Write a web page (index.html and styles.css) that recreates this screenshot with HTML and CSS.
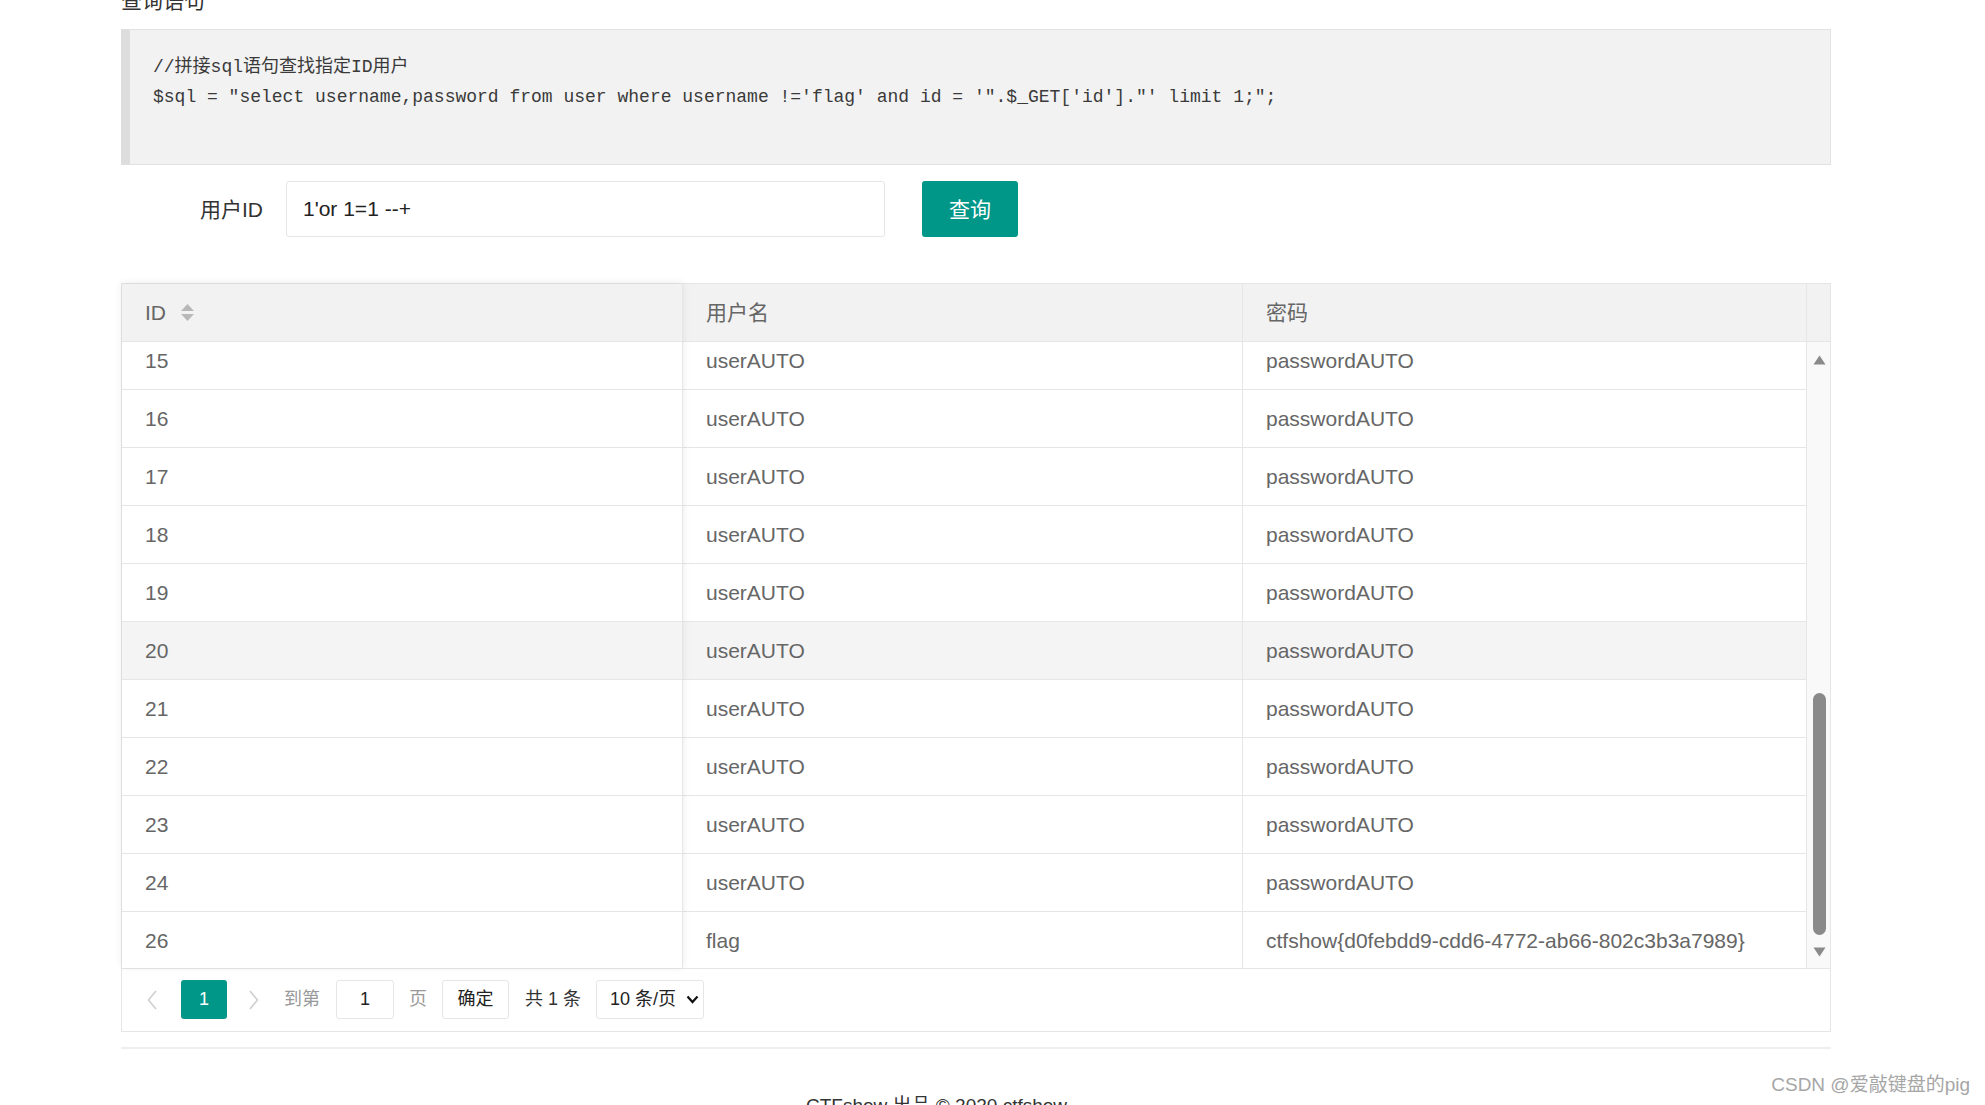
FILE: index.html
```html
<!DOCTYPE html>
<html lang="zh-CN">
<head>
<meta charset="utf-8">
<title>查询语句</title>
<link rel="stylesheet" href="styles.css">
</head>
<body>
<div class="page">
  <div class="title">查询语句</div>
  <pre class="code">//拼接sql语句查找指定ID用户
$sql = "select username,password from user where username !='flag' and id = '".$_GET['id']."' limit 1;";
</pre>
  <form class="form">
    <label class="label">用户ID</label>
    <div class="input">1'or 1=1 --+</div>
    <button class="btn" type="button">查询</button>
  </form>

  <div class="table">
    <div class="grid">
      <div class="fix">
        <div class="th th-id">ID
          <svg class="sort" width="13" height="17" viewBox="0 0 13 17"><path d="M0 7 L6.5 0 L13 7 Z" fill="#b8b8b8"/><path d="M0 10 L13 10 L6.5 17 Z" fill="#b8b8b8"/></svg>
        </div>
        <div class="body">
          <div class="rows">
            <div class="td">15</div>
            <div class="td">16</div>
            <div class="td">17</div>
            <div class="td">18</div>
            <div class="td">19</div>
            <div class="td hover">20</div>
            <div class="td">21</div>
            <div class="td">22</div>
            <div class="td">23</div>
            <div class="td">24</div>
            <div class="td">26</div>
          </div>
        </div>
      </div>
      <div class="main">
        <div class="thead">
          <div class="th c2 cjk">用户名</div>
          <div class="th c3 cjk">密码</div>
          <div class="th patch"></div>
        </div>
        <div class="mbody">
          <div class="body">
            <div class="rows">
              <div class="tr"><div class="td c2">userAUTO</div><div class="td c3">passwordAUTO</div></div>
              <div class="tr"><div class="td c2">userAUTO</div><div class="td c3">passwordAUTO</div></div>
              <div class="tr"><div class="td c2">userAUTO</div><div class="td c3">passwordAUTO</div></div>
              <div class="tr"><div class="td c2">userAUTO</div><div class="td c3">passwordAUTO</div></div>
              <div class="tr"><div class="td c2">userAUTO</div><div class="td c3">passwordAUTO</div></div>
              <div class="tr hover"><div class="td c2">userAUTO</div><div class="td c3">passwordAUTO</div></div>
              <div class="tr"><div class="td c2">userAUTO</div><div class="td c3">passwordAUTO</div></div>
              <div class="tr"><div class="td c2">userAUTO</div><div class="td c3">passwordAUTO</div></div>
              <div class="tr"><div class="td c2">userAUTO</div><div class="td c3">passwordAUTO</div></div>
              <div class="tr"><div class="td c2">userAUTO</div><div class="td c3">passwordAUTO</div></div>
              <div class="tr"><div class="td c2">flag</div><div class="td c3">ctfshow{d0febdd9-cdd6-4772-ab66-802c3b3a7989}</div></div>
            </div>
          </div>
          <div class="sb">
            <svg class="sb-up" width="13" height="10" viewBox="0 0 13 10"><path d="M0.5 9.5 L6.5 0.5 L12.5 9.5 Z" fill="#8a8a8a"/></svg>
            <div class="sb-thumb"></div>
            <svg class="sb-down" width="13" height="10" viewBox="0 0 13 10"><path d="M0.5 0.5 L12.5 0.5 L6.5 9.5 Z" fill="#8a8a8a"/></svg>
          </div>
        </div>
      </div>
    </div>

    <div class="pager">
      <span class="pg-arrow pg-prev"><svg width="10" height="20" viewBox="0 0 10 20"><path d="M9 1 L1.5 10 L9 19" fill="none" stroke="#cfcfcf" stroke-width="1.6"/></svg></span>
      <span class="pg-cur">1</span>
      <span class="pg-arrow pg-next"><svg width="10" height="20" viewBox="0 0 10 20"><path d="M1 1 L8.5 10 L1 19" fill="none" stroke="#cfcfcf" stroke-width="1.6"/></svg></span>
      <span class="pg-txt pg-goto">到第</span>
      <span class="pg-box pg-input">1</span>
      <span class="pg-txt pg-page">页</span>
      <span class="pg-box pg-ok">确定</span>
      <span class="pg-count">共 1 条</span>
      <span class="pg-box pg-select">10 条/页<svg width="13" height="9" viewBox="0 0 13 9"><path d="M1.5 1.5 L6.5 7 L11.5 1.5" fill="none" stroke="#111" stroke-width="2.2"/></svg></span>
    </div>
  </div>

  <div class="hr"></div>
  <div class="foot">CTFshow 出品 © 2020 ctfshow</div>
</div>
<div class="wm">CSDN @爱敲键盘的pig</div>
</body>
</html>
```

FILE: styles.css
```css
html, body {
  margin: 0;
  padding: 0;
  overflow: hidden;
  background: #fff;
}
body {
  font-family: "Liberation Sans", "Noto Sans CJK SC", sans-serif;
  color: #333;
  position: relative;
  height: 1105px;
}
.page {
  width: 1710px;
  margin-left: 121px;
}
.title {
  margin-top: -10px;
  height: 21px;
  line-height: 21px;
  font-size: 21px;
  color: #333;
  margin-bottom: 18px;
}
.code {
  box-sizing: border-box;
  margin: 0;
  height: 136px;
  border: 1px solid #e2e2e2;
  border-left: 9px solid #dddddd;
  background: #f2f2f2;
  padding: 22px 22px 0 23px;
  font-family: "Liberation Mono", "Noto Sans CJK SC", monospace;
  font-size: 18px;
  line-height: 30px;
  color: #3a3a3a;
  white-space: pre;
}
.form {
  display: flex;
  align-items: center;
  margin: 16px 0 0 0;
  height: 56px;
}
.label {
  box-sizing: border-box;
  width: 165px;
  padding-right: 23px;
  padding-bottom: 2px;
  text-align: right;
  font-size: 21px;
  color: #333;
}
.input {
  box-sizing: border-box;
  width: 599px;
  height: 56px;
  border: 1px solid #e6e6e6;
  border-radius: 3px;
  padding-left: 16px;
  font-size: 21px;
  line-height: 54px;
  color: #222;
}
.btn {
  margin-left: 37px;
  width: 96px;
  height: 56px;
  border: none;
  border-radius: 3px;
  background: #009688;
  color: #fff;
  font-family: "Liberation Sans", "Noto Sans CJK SC", sans-serif;
  font-size: 21px;
  padding: 0 0 2px 0;
}

.table {
  margin-top: 46px;
  border: 1px solid #e6e6e6;
  color: #666;
  font-size: 21px;
}
.grid {
  display: flex;
}
.fix {
  width: 561px;
  flex: none;
  position: relative;
  z-index: 1;
  background: #fff;
  box-shadow: 0 -1px 8px rgba(0, 0, 0, 0.08);
}
.main {
  flex: 1;
  display: flex;
  flex-direction: column;
}
.th {
  box-sizing: border-box;
  height: 58px;
  background: #f2f2f2;
  border-bottom: 1px solid #e6e6e6;
  border-right: 1px solid #e6e6e6;
  padding-left: 23px;
  display: flex;
  align-items: center;
  color: #666;
}
.th.cjk {
  padding-bottom: 3px;
}
.th-id .sort {
  margin-left: 15px;
}
.thead {
  display: flex;
}
.c2 { width: 560px; flex: none; }
.c3 { width: 564px; flex: none; }
.patch {
  width: 23px;
  flex: none;
  border-right: none;
  padding: 0;
}
.body {
  height: 626px;
  overflow: hidden;
}
.rows {
  margin-top: -10px;
}
.td {
  box-sizing: border-box;
  height: 58px;
  border-bottom: 1px solid #e6e6e6;
  border-right: 1px solid #e6e6e6;
  padding-left: 23px;
  display: flex;
  align-items: center;
  color: #666;
  background: #fff;
}
.tr {
  display: flex;
}
.hover, .tr.hover .td {
  background: #f4f4f4;
}
.mbody {
  display: flex;
}
.mbody .body {
  width: 1124px;
  flex: none;
}
.sb {
  width: 23px;
  height: 626px;
  background: #f9f9f9;
  display: flex;
  flex-direction: column;
  align-items: center;
}
.sb-up {
  margin-top: 13px;
  margin-left: 1px;
}
.sb-thumb {
  margin-top: 328px;
  width: 13px;
  height: 242px;
  border-radius: 6.5px;
  background: #8a8a8a;
  margin-left: 1px;
}
.sb-down {
  margin-top: 12px;
  margin-left: 1px;
}

.pager {
  box-sizing: border-box;
  height: 63px;
  border-top: 1px solid #e6e6e6;
  padding-top: 11px;
  display: flex;
  align-items: flex-start;
  font-size: 18px;
  color: #333;
}
.pager > span {
  height: 39px;
  line-height: 39px;
  flex: none;
}
.pg-arrow {
  width: 40px;
  display: flex;
  align-items: center;
  justify-content: center;
}
.pg-prev { margin-left: 10px; }
.pg-next { margin-left: 7px; }
.pg-cur {
  margin-left: 9px;
  width: 46px;
  text-align: center;
  background: #009688;
  color: #fff;
  border-radius: 3px;
}
.pg-txt {
  color: #999;
}
.pg-goto { margin-left: 10px; }
.pg-page { margin-left: 15px; }
.pg-box {
  box-sizing: border-box;
  border: 1px solid #e6e6e6;
  border-radius: 3px;
  text-align: center;
  color: #222;
}
.pg-input {
  margin-left: 16px;
  width: 58px;
  line-height: 37px !important;
}
.pg-ok {
  margin-left: 15px;
  width: 67px;
  line-height: 37px !important;
}
.pg-count {
  margin-left: 16px;
  color: #333;
}
.pg-select {
  margin-left: 15px;
  width: 108px;
  line-height: 37px !important;
  display: flex;
  align-items: center;
  padding-left: 13px;
  text-align: left;
}
.pg-select svg {
  margin-left: 10px;
}

.hr {
  margin-top: 15px;
  height: 2px;
  background: #eeeeee;
}
.foot {
  margin-top: 46px;
  padding-left: 685px;
  font-size: 19px;
  line-height: 21px;
  color: #333;
}
.wm {
  position: absolute;
  right: 15px;
  top: 1073px;
  font-size: 19px;
  line-height: 24px;
  color: #a6a6a6;
}
```
